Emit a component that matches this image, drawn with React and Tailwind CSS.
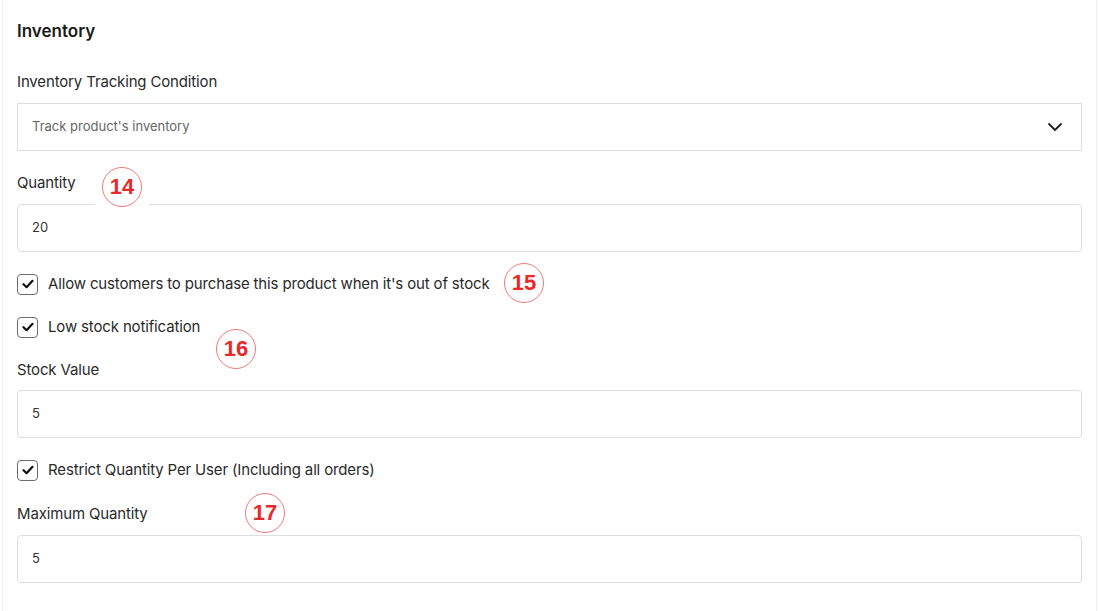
import React from "react";

const font = { fontFamily: "Inter, 'Noto Sans', sans-serif" };

function Badge({ n, className }) {
  return (
    <div className={`absolute flex items-center justify-center ${className}`}>
      <div
        className="w-[40px] h-[40px] rounded-full border border-[#f07a7a] bg-white flex items-center justify-center text-[#e62a2a] text-[22px] font-bold leading-none"
        style={{ fontFamily: "'Liberation Sans', Arial, sans-serif" }}
      >
        {n}
      </div>
    </div>
  );
}

function Check({ label, className = "" }) {
  return (
    <div className={`flex items-center h-[22px] ${className}`}>
      <div className="w-[21px] h-[21px] rounded-[4px] border border-[#6b6b6b] flex items-center justify-center">
        <svg width="12" height="10" viewBox="0 0 12 10">
          <path d="M1.5 5.2 L4.6 8.2 L10.5 1.8" fill="none" stroke="#111" strokeWidth="2.2" strokeLinecap="round" strokeLinejoin="round" />
        </svg>
      </div>
      <span className="ml-[10px] text-[15px] leading-[20px] tracking-[-0.15px] text-[#2a2a2a]">{label}</span>
    </div>
  );
}

function Input({ value, className = "" }) {
  return (
    <div className={`h-[48px] rounded-[4px] border border-[#dedede] flex items-center pl-[14px] text-[13px] text-[#333] ${className}`}>
      {value}
    </div>
  );
}

function Label({ children, className = "" }) {
  return <div className={`text-[15px] leading-[20px] tracking-[-0.15px] text-[#2a2a2a] ${className}`}>{children}</div>;
}

export default function App() {
  return (
    <div className="w-[1099px] h-[611px] bg-white overflow-hidden" style={font}>
      <div className="relative ml-[2px] w-[1095px] h-[611px] border-x border-[#f0f0f0] px-[14px] pt-[19px] flex flex-col">
        <div className="text-[17px] leading-[24px] font-semibold text-[#1a1a1a]">Inventory</div>
        <Label className="mt-[29px]">Inventory Tracking Condition</Label>
        <div className="mt-[11px] h-[48px] border border-[#dedede] flex items-center justify-between pl-[14px] pr-[18px]">
          <span className="text-[13px] text-[#666]">Track product's inventory</span>
          <svg width="16" height="10" viewBox="0 0 16 10">
            <path d="M2 2 L8 8 L14 2" fill="none" stroke="#222" strokeWidth="1.8" strokeLinecap="round" strokeLinejoin="round" />
          </svg>
        </div>
        <Label className="mt-[22px]">Quantity</Label>
        <Input value="20" className="mt-[11px]" />
        <Check className="mt-[21px]" label="Allow customers to purchase this product when it's out of stock" />
        <Check className="mt-[21px]" label="Low stock notification" />
        <Label className="mt-[22px]">Stock Value</Label>
        <Input value="5" className="mt-[10px]" />
        <Check className="mt-[21px]" label="Restrict Quantity Per User (Including all orders)" />
        <Label className="mt-[23px]">Maximum Quantity</Label>
        <Input value="5" className="mt-[11px]" />

        <Badge n="14" className="left-[92px] top-[166px] w-[54px] h-[42px] bg-white" />
        <Badge n="15" className="left-[500px] top-[262px] w-[42px] h-[42px]" />
        <Badge n="16" className="left-[212px] top-[328px] w-[42px] h-[42px]" />
        <Badge n="17" className="left-[241px] top-[492px] w-[42px] h-[42px]" />
      </div>
    </div>
  );
}
